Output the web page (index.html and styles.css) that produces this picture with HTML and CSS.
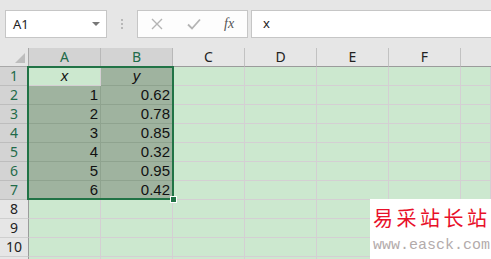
FILE: index.html
```html
<!DOCTYPE html>
<html>
<head>
<meta charset="utf-8">
<link rel="stylesheet" href="styles.css">
</head>
<body>
<div class="toolbar">
  <div class="namebox"><span class="ref">A1</span><span class="caret"></span></div>
  <div class="sep"><i></i><i></i><i></i></div>
  <div class="fbtns">
    <svg class="ic" width="12" height="12" viewBox="0 0 12 12"><path d="M1 1L11 11M11 1L1 11" stroke="#b4b4b4" stroke-width="1.4" fill="none"/></svg>
    <svg class="ic" width="14" height="12" viewBox="0 0 14 12"><path d="M1 6.5L5 10.5L13 1.5" stroke="#b4b4b4" stroke-width="1.8" fill="none"/></svg>
    <span class="fx">fx</span>
  </div>
  <div class="finput">x</div>
</div>
<div class="sheet">
  <div class="grid">
    <div class="corner"><span class="tri"></span></div>
    <div class="ch sel">A</div><div class="ch sel">B</div><div class="ch">C</div><div class="ch">D</div><div class="ch">E</div><div class="ch">F</div><div class="ch last"></div>

    <div class="rh sel">1</div><div class="c act it">x</div><div class="c s it">y</div><div class="c"></div><div class="c"></div><div class="c"></div><div class="c"></div><div class="c"></div>
    <div class="rh sel">2</div><div class="c s n">1</div><div class="c s n">0.62</div><div class="c"></div><div class="c"></div><div class="c"></div><div class="c"></div><div class="c"></div>
    <div class="rh sel">3</div><div class="c s n">2</div><div class="c s n">0.78</div><div class="c"></div><div class="c"></div><div class="c"></div><div class="c"></div><div class="c"></div>
    <div class="rh sel">4</div><div class="c s n">3</div><div class="c s n">0.85</div><div class="c"></div><div class="c"></div><div class="c"></div><div class="c"></div><div class="c"></div>
    <div class="rh sel">5</div><div class="c s n">4</div><div class="c s n">0.32</div><div class="c"></div><div class="c"></div><div class="c"></div><div class="c"></div><div class="c"></div>
    <div class="rh sel">6</div><div class="c s n">5</div><div class="c s n">0.95</div><div class="c"></div><div class="c"></div><div class="c"></div><div class="c"></div><div class="c"></div>
    <div class="rh sel">7</div><div class="c s n">6</div><div class="c s n">0.42</div><div class="c"></div><div class="c"></div><div class="c"></div><div class="c"></div><div class="c"></div>
    <div class="rh">8</div><div class="c"></div><div class="c"></div><div class="c"></div><div class="c"></div><div class="c"></div><div class="c"></div><div class="c"></div>
    <div class="rh">9</div><div class="c"></div><div class="c"></div><div class="c"></div><div class="c"></div><div class="c"></div><div class="c"></div><div class="c"></div>
    <div class="rh">10</div><div class="c"></div><div class="c"></div><div class="c"></div><div class="c"></div><div class="c"></div><div class="c"></div><div class="c"></div>
    <div class="rh"></div><div class="c"></div><div class="c"></div><div class="c"></div><div class="c"></div><div class="c"></div><div class="c"></div><div class="c"></div>
  </div>
  <div class="selection"><span class="handle"></span></div>
  <div class="watermark">
    <div class="wm-cn">易采站长站</div>
    <div class="wm-en">www.easck.com</div>
  </div>
</div>
</body>
</html>
```

FILE: styles.css
```css
html, body {
  margin: 0;
  padding: 0;
}
body {
  background: #e6e6e6;
  font-family: "Liberation Sans", Arial, sans-serif;
  width: 491px;
  height: 259px;
  overflow: hidden;
}
.toolbar {
  height: 48px;
  box-sizing: border-box;
  padding-top: 10px;
  display: flex;
  align-items: flex-start;
}
.namebox {
  margin-left: 5px;
  width: 102px;
  height: 28px;
  box-sizing: border-box;
  background: #fff;
  border: 1px solid #c6c6c6;
  display: flex;
  align-items: center;
  justify-content: space-between;
  padding: 0 6px 0 7px;
  font-family: "Noto Sans", sans-serif;
  font-size: 13px;
  color: #222;
}
.caret {
  width: 0;
  height: 0;
  border-left: 4px solid transparent;
  border-right: 4px solid transparent;
  border-top: 4px solid #777;
}
.sep {
  width: 30px;
  height: 28px;
  display: flex;
  flex-direction: column;
  align-items: center;
  justify-content: center;
  gap: 2px;
}
.sep i {
  display: block;
  width: 2px;
  height: 2px;
  background: #b8b8b8;
}
.fbtns {
  width: 111px;
  height: 28px;
  box-sizing: border-box;
  background: #fdfdfd;
  border: 1px solid #c6c6c6;
  display: flex;
  align-items: center;
  padding-left: 13px;
}
.fbtns .ic:nth-child(1) { margin-right: 24px; }
.fbtns .ic:nth-child(2) { margin-right: 23px; }
.fx {
  font-family: "Liberation Serif", serif;
  font-style: italic;
  font-size: 14px;
  color: #555;
}
.finput {
  margin-left: 3px;
  flex: 1;
  height: 28px;
  box-sizing: border-box;
  background: #fff;
  border: 1px solid #c6c6c6;
  border-right: none;
  padding-left: 11px;
  font-family: "Noto Sans", sans-serif;
  font-size: 13px;
  line-height: 25px;
  color: #222;
}
.sheet {
  position: relative;
  height: 211px;
  overflow: hidden;
}
.grid {
  display: grid;
  grid-template-columns: 29px repeat(6, 72px) 1fr;
  grid-auto-rows: 19px;
}
.grid > div {
  box-sizing: border-box;
}
.corner {
  background: #e6e6e6;
  border-right: 1px solid #a8a8a8;
  border-bottom: 1px solid #a8a8a8;
  position: relative;
}
.tri {
  position: absolute;
  right: 3px;
  bottom: 3px;
  width: 0;
  height: 0;
  border-left: 10px solid transparent;
  border-bottom: 10px solid #bdbdbd;
}
.ch {
  background: #e6e6e6;
  border-right: 1px solid #c2c2c2;
  border-bottom: 1px solid #9b9b9b;
  text-align: center;
  font-family: "Noto Sans", sans-serif;
  font-size: 14px;
  line-height: 18px;
  color: #222;
}
.ch.sel {
  background: #d3d3d3;
  color: #1f6b4a;
  border-right-color: #b8b8b8;
}
.ch.last { border-right: none; }
.rh {
  background: #e6e6e6;
  border-right: 1px solid #9b9b9b;
  border-bottom: 1px solid #cfcfcf;
  text-align: center;
  font-family: "Noto Sans", sans-serif;
  font-size: 14px;
  line-height: 18px;
  color: #222;
}
.rh.sel {
  background: #d3d3d3;
  color: #1f6b4a;
  border-bottom-color: #bdbdbd;
}
.c {
  background: #cce8cf;
  border-right: 1px solid #d4cfd3;
  border-bottom: 1px solid #d4cfd3;
  font-size: 15px;
  line-height: 18px;
  color: #111;
  padding: 0 2px;
}
.c.s {
  background: #9fb39f;
  border-color: #8fa38f;
}
.c.act {
  background: #cce8cf;
}
.it {
  font-style: italic;
  text-align: center;
}
.n {
  text-align: right;
}
.selection {
  position: absolute;
  left: 27px;
  top: 18px;
  width: 147px;
  height: 134px;
  box-sizing: border-box;
  border: 2px solid #217346;
}
.handle {
  position: absolute;
  right: -5px;
  bottom: -5px;
  width: 5px;
  height: 5px;
  background: #217346;
  border: 1px solid #fff;
}
.watermark {
  position: absolute;
  left: 370px;
  top: 151px;
  width: 121px;
  height: 60px;
  background: #fff;
  padding-left: 3px;
  box-sizing: border-box;
}
.wm-cn {
  font-family: "Noto Sans CJK SC", sans-serif;
  font-size: 20px;
  letter-spacing: 3.5px;
  color: #e8102a;
  line-height: 24px;
  margin-top: 7px;
  white-space: nowrap;
}
.wm-en {
  font-family: "Liberation Mono", monospace;
  font-size: 15px;
  color: #b3abab;
  line-height: 20px;
  margin-top: 6px;
  white-space: nowrap;
}
```
